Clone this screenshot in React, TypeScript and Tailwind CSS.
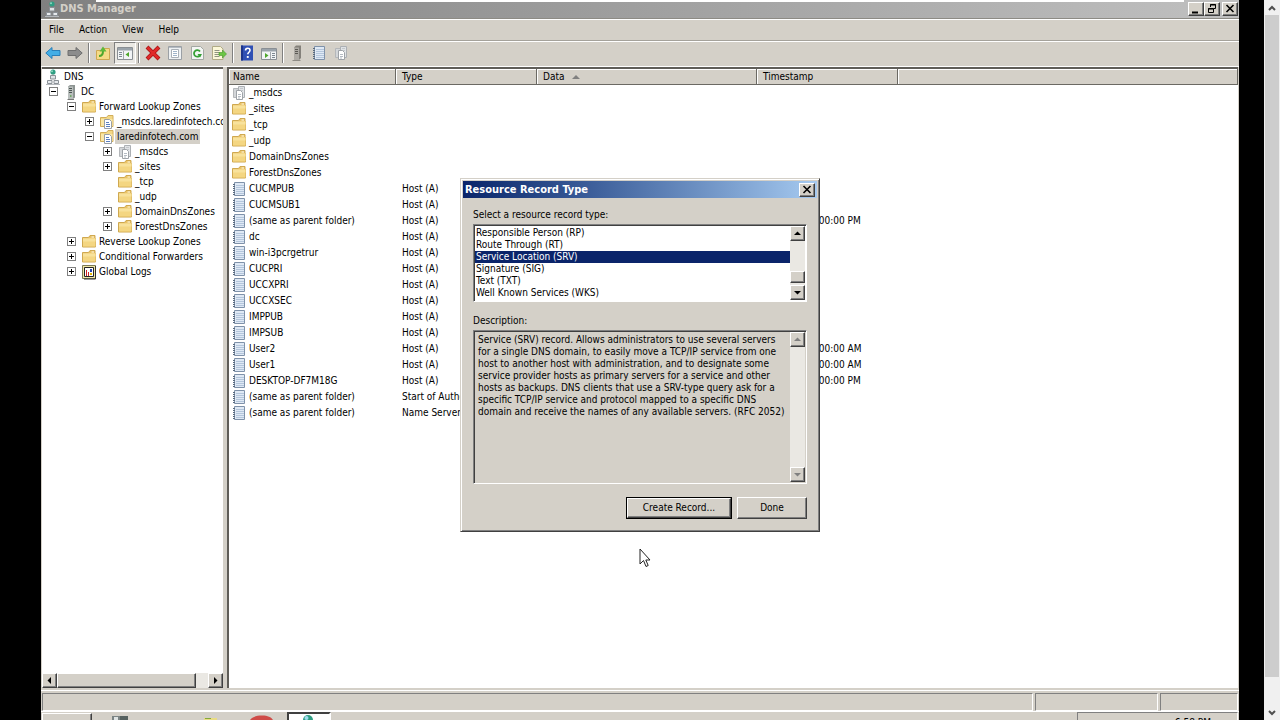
import type { ReactNode } from 'react';
import clsx from 'clsx';

type IconName = 'dns' | 'server' | 'folder' | 'zone' | 'deleg' | 'logs' | 'record';

type TreeNode = {
  label: string;
  icon: IconName;
  state?: 'open' | 'closed';
  selected?: boolean;
  children?: TreeNode[];
};

type Row = { name: string; icon: IconName; type?: string; time?: string };

const raised =
  'bg-[#d4d0c8] border border-t-white border-l-white border-r-[#404040] border-b-[#404040] shadow-[inset_-1px_-1px_0_#808080]';
const sunken =
  'border border-t-[#808080] border-l-[#808080] border-r-white border-b-white shadow-[inset_1px_1px_0_#404040]';
const track = 'bg-[#eae8e3]';

const zones: TreeNode[] = [
  {
    label: 'DC',
    icon: 'server',
    state: 'open',
    children: [
      {
        label: 'Forward Lookup Zones',
        icon: 'folder',
        state: 'open',
        children: [
          { label: '_msdcs.laredinfotech.com', icon: 'zone', state: 'closed' },
          {
            label: 'laredinfotech.com',
            icon: 'zone',
            state: 'open',
            selected: true,
            children: [
              { label: '_msdcs', icon: 'deleg', state: 'closed' },
              { label: '_sites', icon: 'folder', state: 'closed' },
              { label: '_tcp', icon: 'folder' },
              { label: '_udp', icon: 'folder' },
              { label: 'DomainDnsZones', icon: 'folder', state: 'closed' },
              { label: 'ForestDnsZones', icon: 'folder', state: 'closed' },
            ],
          },
        ],
      },
      { label: 'Reverse Lookup Zones', icon: 'folder', state: 'closed' },
      { label: 'Conditional Forwarders', icon: 'folder', state: 'closed' },
      { label: 'Global Logs', icon: 'logs', state: 'closed' },
    ],
  },
];

const rows: Row[] = [
  { name: '_msdcs', icon: 'deleg' },
  { name: '_sites', icon: 'folder' },
  { name: '_tcp', icon: 'folder' },
  { name: '_udp', icon: 'folder' },
  { name: 'DomainDnsZones', icon: 'folder' },
  { name: 'ForestDnsZones', icon: 'folder' },
  { name: 'CUCMPUB', icon: 'record', type: 'Host (A)' },
  { name: 'CUCMSUB1', icon: 'record', type: 'Host (A)' },
  { name: '(same as parent folder)', icon: 'record', type: 'Host (A)', time: '3/9/2017 10:00:00 PM' },
  { name: 'dc', icon: 'record', type: 'Host (A)' },
  { name: 'win-i3pcrgetrur', icon: 'record', type: 'Host (A)' },
  { name: 'CUCPRI', icon: 'record', type: 'Host (A)' },
  { name: 'UCCXPRI', icon: 'record', type: 'Host (A)' },
  { name: 'UCCXSEC', icon: 'record', type: 'Host (A)' },
  { name: 'IMPPUB', icon: 'record', type: 'Host (A)' },
  { name: 'IMPSUB', icon: 'record', type: 'Host (A)' },
  { name: 'User2', icon: 'record', type: 'Host (A)', time: '3/16/2017 9:00:00 AM' },
  { name: 'User1', icon: 'record', type: 'Host (A)', time: '3/16/2017 9:00:00 AM' },
  { name: 'DESKTOP-DF7M18G', icon: 'record', type: 'Host (A)', time: '3/20/2017 8:00:00 PM' },
  { name: '(same as parent folder)', icon: 'record', type: 'Start of Authority (SOA)' },
  { name: '(same as parent folder)', icon: 'record', type: 'Name Server (NS)' },
];

const recordTypes = [
  'Responsible Person (RP)',
  'Route Through (RT)',
  'Service Location (SRV)',
  'Signature (SIG)',
  'Text (TXT)',
  'Well Known Services (WKS)',
];

const description =
  'Service (SRV) record. Allows administrators to use several servers for a single DNS domain, to easily move a TCP/IP service from one host to another host with administration, and to designate some service provider hosts as primary servers for a service and other hosts as backups. DNS clients that use a SRV-type query ask for a specific TCP/IP service and protocol mapped to a specific DNS domain and receive the names of any available servers. (RFC 2052)';

function Svg({ children }: { children: ReactNode }) {
  return (
    <svg viewBox="0 0 16 16" className="size-4 shrink-0" aria-hidden="true">
      {children}
    </svg>
  );
}

const pages = (
  <>
    <path d="M2.5 3.5h5v9h-5z" fill="#d3d6d9" stroke="#b4b7ba" />
    <path d="M7.5 1.5h6v11h-6z" fill="#e0e3e6" stroke="#acb0b4" />
    <path d="M9 3.5h3M9 5.5h3" stroke="#c3c7cb" />
    <path d="M5.500 5.500h4l2 2v7h-6z" fill="#fff" stroke="#9ea3a8" />
    <path d="M7 9.500h3M7 11.500h3M7 13h2" stroke="#b5bcc4" />
  </>
);

const itemIcons: Record<IconName, ReactNode> = {
  dns: (
    <>
      <circle cx="8" cy="3" r="2.6" fill="#2f9e83" />
      <circle cx="7" cy="2.2" r="1" fill="#8fd8c2" />
      <path d="M8 5.5v3" stroke="#777" />
      <path d="M5.5 6.5h5v3.5h-5z" fill="#dfe3e6" stroke="#8b9197" />
      <path d="M2.5 11.5h4.5v3h-4.500zM9 11.500h4.500v3H9z" fill="#e8ebee" stroke="#8b9197" />
      <path d="M1 15.500h14" stroke="#b4b8bc" />
    </>
  ),
  server: (
    <>
      <path d="M5 2.500 7 1h5v12.500L10 15H5z" fill="#8d9492" />
      <path d="M5 2.500h5V15H5z" fill="#b9bfbd" />
      <path d="M6 4.500h3M6 6.500h3M6 8.500h3" stroke="#4c5553" />
      <path d="M7 12h1.500" stroke="#5ba04d" strokeWidth="1.500" />
      <path d="M4.500 15.500h6.500" stroke="#777" />
    </>
  ),
  folder: (
    <>
      <path d="M1.500 3.500h6l1.500-2h5v3h.5v8.500h-13z" fill="#e9c266" stroke="#cfa850" />
      <path d="M2 4.500h12.500v8H2z" fill="#f4d682" />
      <path d="M2 4.500h12.500v3H2z" fill="#f8e29c" />
      <path d="M10.500 2.500h2.500v1h-2.500z" fill="#fffbe6" />
    </>
  ),
  zone: (
    <>
      <path d="M1.500 3.500h6l1.500-2h5v11h-12.500z" fill="#f3d887" stroke="#d2ae5a" />
      <path d="M2 5h11.500v7H2z" fill="#fae7a8" />
      <path d="M5.500 5.500h5l2 2v7h-7z" fill="#fff" stroke="#9aa0a6" />
      <path d="M7 8.500h3M7 10.500h4M7 12.500h4" stroke="#5b7fc0" />
    </>
  ),
  deleg: pages,
  logs: (
    <>
      <path d="M1.500 1.500h13v13h-13z" fill="#efe6a4" stroke="#7d7a55" />
      <path d="M3.500 3.500h9v9h-9z" fill="#fff" stroke="#222" />
      <path d="M5.500 12V6M7.500 12V8" stroke="#c22" />
      <path d="M9 5h2v3H9z" fill="#2545b0" />
      <path d="M9 9h2v2H9z" fill="#e5b800" />
      <path d="M14.500 2v13H3" fill="none" stroke="#333" />
    </>
  ),
  record: (
    <>
      <path d="M3.500 1.500h10v13h-10z" fill="#dfe9f5" stroke="#7f92aa" />
      <path d="M5 4.500h8M5 6.500h8M5 8.500h8M5 10.500h8M5 12.500h8" stroke="#b4c6dc" />
      <path d="M2 3.500h2M2 5.500h2M2 7.500h2M2 9.500h2M2 11.500h2M2 13.500h2" stroke="#58697e" />
    </>
  ),
};

function ItemIcon({ name }: { name: IconName }) {
  return <Svg>{itemIcons[name]}</Svg>;
}

const toolIcons = {
  back: (
    <path d="M.8 8 7 2.500v3h8v5H7v3z" fill="#43aee6" stroke="#2a7fb8" strokeLinejoin="round" />
  ),
  forward: (
    <path d="M15.200 8 9 2.500v3H1v5h8v3z" fill="#8c8c8c" stroke="#6e6e6e" strokeLinejoin="round" />
  ),
  up: (
    <>
      <path d="M1.500 5.500h6l1.500-2h5.500v11h-13z" fill="#f5db86" stroke="#cfa850" />
      <path d="M4 11c3 0 4-1.500 4-5" fill="none" stroke="#4ea72c" strokeWidth="2" />
      <path d="M4.500 6.500 8 1.500l3.500 5z" fill="#5fb83a" />
    </>
  ),
  tree: (
    <>
      <path d="M.5 2.500h15v12H.5z" fill="#f2f4f6" stroke="#8a8f94" />
      <path d="M1 3h14v2.500H1z" fill="#9aa3ab" />
      <path d="M2 7.500h3M2 9.500h3M2 11.500h3" stroke="#7c8790" />
      <path d="M6.500 6v8" stroke="#a3a8ad" />
      <path d="M12 7v5L8.500 9.500z" fill="#4ea72c" />
    </>
  ),
  remove: (
    <>
      <path d="m2 2 12 12M14 2 2 14" stroke="#a81414" strokeWidth="4" />
      <path d="m2.500 2.500 11 11M13.500 2.500l-11 11" stroke="#e02a2a" strokeWidth="2.500" />
    </>
  ),
  props: (
    <>
      <path d="M1.500 1.500h13v13h-13z" fill="#eef1f3" stroke="#9ba0a5" />
      <path d="M4.500 4.500h7v8h-7z" fill="#fff" stroke="#a9b0b7" />
      <path d="M6 6.500h4M6 8.500h4M6 10.500h4" stroke="#9fb4c9" />
      <path d="M2 2.500h12" stroke="#b5bcc3" />
    </>
  ),
  refresh: (
    <>
      <path d="M2.500 1.500h9l3 3v10h-12z" fill="#f4f6f4" stroke="#a3a8a3" />
      <path d="M11.300 9.800A3.300 3.300 0 1 1 11 6.500" fill="none" stroke="#35a035" strokeWidth="1.800" />
      <path d="M8.500 9h4.500l-2 3.500z" fill="#35a035" />
    </>
  ),
  export: (
    <>
      <path d="M1.500 1.500h8l2.500 2.500v10.500H1.500z" fill="#fbf7d8" stroke="#b0ab86" />
      <path d="M3.500 5.500h5M3.500 7.500h5M3.500 9.500h5M3.500 11.500h5" stroke="#8f9480" />
      <path d="M8 7.500h3.500V5l4 4-4 4v-2.500H8z" fill="#6cc644" stroke="#48952a" strokeWidth=".6" />
    </>
  ),
  help: (
    <>
      <path d="M2 .5h12v15H2z" fill="#3050b4" />
      <path d="M2 .5h2v15H2z" fill="#1d348a" />
      <path d="M6.500 5.500c0-3 4.500-3 4.500-.2 0 2-2.200 1.900-2.200 4" fill="none" stroke="#fff" strokeWidth="1.600" />
      <path d="M7.800 11h1.900v1.900H7.800z" fill="#fff" />
    </>
  ),
  console: (
    <>
      <path d="M.5 3.500h15v11H.5z" fill="#f2f4f6" stroke="#8a8f94" />
      <path d="M1 4h14v2.500H1z" fill="#9aa3ab" />
      <path d="M9.500 7v7" stroke="#a3a8ad" />
      <path d="M11 8.500h3M11 10.500h3M11 12.500h3" stroke="#7c8790" />
      <path d="M4 8v5l3.500-2.500z" fill="#4ea72c" />
    </>
  ),
  server: (
    <>
      <path d="M5 2.500 7 .5h5v12.500L10 15H5z" fill="#84817b" />
      <path d="M5 2.500h5V15H5z" fill="#aeaba5" />
      <path d="M6 4.500h3M6 6.500h3M6 8.500h3" stroke="#5b5954" />
      <path d="M3.500 15.500h8" stroke="#8e8b85" />
    </>
  ),
  list: itemIcons.record,
  docs: pages,
};

type ToolName = keyof typeof toolIcons;

const toolGroups: { name: ToolName; label: string }[][] = [
  [
    { name: 'back', label: 'Back' },
    { name: 'forward', label: 'Forward' },
  ],
  [
    { name: 'up', label: 'Up one level' },
    { name: 'tree', label: 'Show console tree' },
  ],
  [
    { name: 'remove', label: 'Delete' },
    { name: 'props', label: 'Properties' },
    { name: 'refresh', label: 'Refresh' },
    { name: 'export', label: 'Export list' },
  ],
  [
    { name: 'help', label: 'Help' },
    { name: 'console', label: 'Show action pane' },
  ],
  [
    { name: 'server', label: 'New server' },
    { name: 'list', label: 'New record' },
    { name: 'docs', label: 'New zone' },
  ],
];

const arrows = {
  up: 'M4 9h7L7.500 5.500z',
  down: 'M4 6h7L7.500 9.500z',
  left: 'M9 4v7L5.500 7.500z',
  right: 'M6 4v7l3.500-3.500z',
};

function ArrowButton({ dir, disabled }: { dir: keyof typeof arrows; disabled?: boolean }) {
  return (
    <button aria-label={`Scroll ${dir}`} disabled={disabled} className={clsx(raised, 'size-[15px] shrink-0')}>
      <svg viewBox="1 1 13 13" className="size-[13px]">
        <path d={arrows[dir]} fill={disabled ? '#808080' : '#000'} />
      </svg>
    </button>
  );
}

function TreeItem({ node }: { node: TreeNode }) {
  return (
    <li>
      <div className="flex h-[15px] items-center pl-[7px]">
        {node.state ? (
          <button
            aria-label={node.state === 'open' ? 'Collapse' : 'Expand'}
            className="mr-[5px] size-[9px] shrink-0 border border-[#808080] bg-white"
          >
            <svg viewBox="0 0 7 7" className="size-[7px]">
              <path d={node.state === 'open' ? 'M1 3.500h5' : 'M1 3.500h5M3.500 1v5'} stroke="#000" />
            </svg>
          </button>
        ) : (
          <span className="mr-[5px] w-[9px] shrink-0" />
        )}
        <ItemIcon name={node.icon} />
        <span className={clsx('px-[2px] leading-[15px] whitespace-nowrap', node.selected && 'bg-[#d4d0c8]')}>
          {node.label}
        </span>
      </div>
      {node.children && (
        <ul className="pl-[18px]">
          {node.children.map((child) => (
            <TreeItem key={child.label} node={child} />
          ))}
        </ul>
      )}
    </li>
  );
}

function TitleBar() {
  return (
    <header className="flex h-[18px] bg-linear-to-r from-[#808080] to-[#c0c0c0]">
      <div className="flex w-[55px] items-center pl-[3px]">
        <ItemIcon name="dns" />
        <h1 className="text-[11px] leading-4 font-bold whitespace-nowrap text-[#d4d0c8]">DNS Manager</h1>
      </div>
      <div className="h-[2px] flex-1 bg-white" />
      <div className="flex w-[55px] items-center justify-end pr-px">
        <button aria-label="Minimize" className={clsx(raised, 'h-[14px] w-4')}>
          <svg viewBox="0 0 14 12" className="h-3 w-[14px]">
            <path d="M3 9.500h6" stroke="#000" strokeWidth="2" />
          </svg>
        </button>
        <button aria-label="Restore" className={clsx(raised, 'h-[14px] w-4')}>
          <svg viewBox="0 0 14 12" className="h-3 w-[14px]">
            <path d="M5.500 4V1.500h5v4H9M5 2h6M3.500 5.500h5v4h-5zM3 6h6" fill="none" stroke="#000" />
          </svg>
        </button>
        <button aria-label="Close" className={clsx(raised, 'ml-[2px] h-[14px] w-4')}>
          <svg viewBox="0 0 14 12" className="h-3 w-[14px]">
            <path d="m3.500 2 7 7M10.500 2l-7 7" stroke="#000" strokeWidth="1.600" />
          </svg>
        </button>
      </div>
    </header>
  );
}

function Toolbar() {
  return (
    <div className="flex h-6 items-center border-t border-[#a5a29b] pl-px shadow-[inset_0_1px_0_#fff]">
      {toolGroups.map((group, i) => (
        <div key={i} className="flex items-center">
          {i > 0 && <span className="mr-[3px] ml-[2px] h-5 w-px bg-[#808080] shadow-[1px_0_0_#fff]" />}
          {group.map(({ name, label }) => (
            <button
              key={name}
              aria-label={label}
              title={label}
              className={clsx(
                'flex h-[22px] w-[22px] items-center justify-center',
                name === 'tree' &&
                  'border border-t-[#808080] border-l-[#808080] border-r-white border-b-white bg-[#ebe9e4]',
              )}
            >
              <Svg>{toolIcons[name]}</Svg>
            </button>
          ))}
        </div>
      ))}
    </div>
  );
}

function TreePane() {
  return (
    <nav className="flex w-[181px] shrink-0 flex-col border-t-2 border-[#5f5d58] bg-white">
      <div className="flex-1 overflow-hidden">
        <div className="flex h-[15px] items-center pl-[3px]">
          <ItemIcon name="dns" />
          <span className="px-[3px]">DNS</span>
        </div>
        <ul>
          {zones.map((node) => (
            <TreeItem key={node.label} node={node} />
          ))}
        </ul>
      </div>
      <div className={clsx('flex', track)}>
        <ArrowButton dir="left" />
        <div className={clsx(raised, 'flex-1')} />
        <div className="w-3" />
        <ArrowButton dir="right" />
      </div>
    </nav>
  );
}

function HeadCell({ children }: { children?: ReactNode }) {
  return (
    <th className="h-4 border-r border-b border-[#6b6963] bg-[#d4d0c8] p-0 pl-1 text-left font-normal shadow-[inset_1px_1px_0_#fff]">
      {children}
    </th>
  );
}

function ListPane() {
  return (
    <section className="min-w-0 flex-1 overflow-hidden border-t-2 border-l-2 border-[#5f5d58] bg-white">
      <table className="w-full table-fixed border-separate border-spacing-0">
        <colgroup>
          <col className="w-[167px]" />
          <col className="w-[141px]" />
          <col className="w-[220px]" />
          <col className="w-[141px]" />
          <col />
        </colgroup>
        <thead>
          <tr>
            <HeadCell>Name</HeadCell>
            <HeadCell>
              <span className="pl-[2px]">Type</span>
            </HeadCell>
            <HeadCell>
              <span className="flex items-center gap-2 pl-[2px]">
                Data
                <svg viewBox="0 0 8 4" className="h-1 w-2">
                  <path d="M0 4h8L4 0z" fill="#808080" />
                </svg>
              </span>
            </HeadCell>
            <HeadCell>
              <span className="pl-[2px]">Timestamp</span>
            </HeadCell>
            <HeadCell />
          </tr>
        </thead>
        <tbody>
          {rows.map((row, i) => (
            <tr key={i} className="h-4">
              <td className="p-0 pl-[2px]">
                <div className="flex h-4 items-center gap-[2px] whitespace-nowrap">
                  <ItemIcon name={row.icon} />
                  {row.name}
                </div>
              </td>
              <td className="p-0 pl-[6px] whitespace-nowrap">{row.type}</td>
              <td className="p-0" />
              <td className="p-0 pl-1 whitespace-nowrap">{row.time}</td>
              <td className="p-0" />
            </tr>
          ))}
        </tbody>
      </table>
    </section>
  );
}

function RecordTypeDialog() {
  return (
    <div
      role="dialog"
      aria-labelledby="dialog-title"
      className="w-[360px] border border-t-[#d4d0c8] border-l-[#d4d0c8] border-r-[#404040] border-b-[#404040] bg-[#d4d0c8] p-[2px] shadow-[inset_1px_1px_0_#fff,inset_-1px_-1px_0_#808080]"
    >
      <div className="flex h-[17px] items-center justify-between bg-linear-to-r from-[#0a246a] to-[#a6caf0] px-[2px]">
        <h2 id="dialog-title" className="text-[11px] font-bold text-white">
          Resource Record Type
        </h2>
        <button aria-label="Close" className={clsx(raised, 'h-[14px] w-4')}>
          <svg viewBox="0 0 14 12" className="h-3 w-[14px]">
            <path d="m3.500 2 7 7M10.500 2l-7 7" stroke="#000" strokeWidth="1.600" />
          </svg>
        </button>
      </div>
      <div className="px-[10px] pt-[9px] pb-[10px]">
        <label htmlFor="record-type" className="mb-px block h-4 leading-4">
          Select a resource record type:
        </label>
        <div className={clsx(sunken, 'flex bg-white p-px')}>
          <select
            id="record-type"
            size={6}
            defaultValue="Service Location (SRV)"
            className="h-[74px] min-w-0 flex-1 appearance-none overflow-hidden bg-white py-px outline-none"
          >
            {recordTypes.map((t) => (
              <option
                key={t}
                value={t}
                className="h-3 min-h-0 p-0 pl-px leading-3 checked:bg-[#0a246a] checked:bg-linear-to-r checked:from-[#0a246a] checked:to-[#0a246a] checked:text-white"
              >
                {t}
              </option>
            ))}
          </select>
          <div className={clsx('flex w-[15px] flex-col', track)}>
            <ArrowButton dir="up" />
            <div className="flex-1" />
            <div className={clsx(raised, 'mb-[2px] h-3')} />
            <ArrowButton dir="down" />
          </div>
        </div>
        <label htmlFor="record-description" className="mt-[11px] mb-px block h-4 leading-4">
          Description:
        </label>
        <div className={clsx(sunken, 'flex h-[154px] p-px')}>
          <textarea
            id="record-description"
            readOnly
            value={description}
            className="min-w-0 flex-1 resize-none overflow-hidden py-[2px] pl-[3px] leading-3 outline-none"
          />
          <div className={clsx('flex w-[15px] flex-col justify-between', track)}>
            <ArrowButton dir="up" disabled />
            <ArrowButton dir="down" disabled />
          </div>
        </div>
        <div className="mt-[13px] flex justify-end gap-[5px]">
          <button className="border border-black">
            <span className={clsx(raised, 'flex h-5 w-[104px] items-center justify-center')}>Create Record...</span>
          </button>
          <button className={clsx(raised, 'h-[22px] w-[70px]')}>Done</button>
        </div>
      </div>
    </div>
  );
}

function StatusBar() {
  const cell = 'h-[18px] border border-t-[#808080] border-l-[#808080] border-r-white border-b-white';
  return (
    <footer className="flex gap-[2px] border-t border-white pt-[2px] pr-px pl-px">
      <div className={clsx(cell, 'flex-1')} />
      <div className={clsx(cell, 'w-[123px]')} />
      <div className={clsx(cell, 'w-[78px]')} />
    </footer>
  );
}

function Taskbar() {
  return (
    <div className="flex h-[9px] items-start overflow-hidden border-t border-white pl-px">
      <button aria-label="Start" className={clsx(raised, 'mt-px h-6 w-[50px] shrink-0')} />
      <svg viewBox="0 0 195 8" className="h-2 w-[195px] shrink-0" aria-hidden="true">
        <path d="M20 4h13v4H20z" fill="#7b8484" />
        <path d="M22 5h4v3h-4z" fill="#dfe4e4" />
        <path d="M28 4h8v4h-8z" fill="#56615f" />
        <path d="M112 6h13v2h-13z" fill="#e9dc84" />
        <path d="M113 6h6v1h-6z" fill="#84a83c" />
        <path d="M158 8c2-3 6-4.500 12-4.500S179 5 181 8z" fill="#cf4c48" />
      </svg>
      <button
        aria-label="DNS Manager"
        className="flex h-6 w-11 shrink-0 items-start justify-center border-2 border-[#404040] border-r-white bg-white"
      >
        <svg viewBox="0 0 16 16" className="size-4">
          <circle cx="7" cy="6" r="5" fill="#2f9e83" />
          <circle cx="5.500" cy="4" r="2" fill="#9fdcf0" />
        </svg>
      </button>
      <div className="flex-1" />
      <div className="mr-px flex h-6 w-[161px] justify-end border border-[#808080] border-r-white pt-1 pr-[26px]">
        <span className="leading-3">6:58 PM</span>
      </div>
    </div>
  );
}

function OuterScrollbar() {
  return (
    <div className="flex w-4 shrink-0 flex-col items-center bg-[#f0f0f0]">
      <svg viewBox="0 0 16 15" className="h-[15px] w-4" aria-hidden="true">
        <path d="m5 10 3-3 3 3" fill="none" stroke="#505050" strokeWidth="2" />
      </svg>
      <div className="w-[14px] flex-1 bg-[#cdcdcd]" />
      <svg viewBox="0 0 16 43" className="h-[43px] w-4" aria-hidden="true">
        <path d="m5 34 3 3 3-3" fill="none" stroke="#505050" strokeWidth="2" />
      </svg>
    </div>
  );
}

export default function App() {
  return (
    <div className="flex h-screen overflow-hidden bg-black font-['DejaVu_Sans_Condensed','Liberation_Sans',sans-serif] text-[10px] leading-3 text-black">
      <div className="relative mr-[25px] ml-[41px] flex min-w-0 flex-1 flex-col bg-[#d4d0c8]">
        <TitleBar />
        <div className="flex h-[22px] items-center gap-[15px] border-t border-[#8d8b85] pl-2 shadow-[inset_0_1px_0_#fff]">
          {['File', 'Action', 'View', 'Help'].map((m) => (
            <button key={m}>{m}</button>
          ))}
        </div>
        <Toolbar />
        <main className="mt-[2px] flex min-h-0 flex-1 gap-1 border-t border-white px-px">
          <TreePane />
          <ListPane />
        </main>
        <div className="h-[2px]" />
        <StatusBar />
        <Taskbar />

        <div className="absolute inset-x-0 top-[178px] flex justify-center">
          <RecordTypeDialog />
        </div>
        <svg viewBox="0 0 12 20" className="absolute top-[548px] left-[598px] h-5 w-3" aria-hidden="true">
          <path d="M1 1v15l3.500-3.500L7 18.500l2.200-1L6.800 12H11z" fill="#fff" stroke="#222" />
        </svg>
      </div>
      <OuterScrollbar />
    </div>
  );
}
